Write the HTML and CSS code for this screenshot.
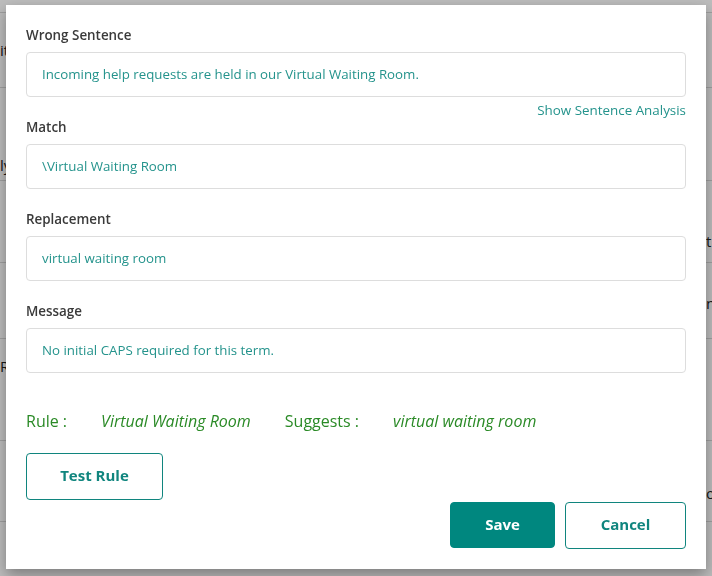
FILE: index.html
```html
<!DOCTYPE html>
<html lang="en">
<head>
    <meta charset="UTF-8">
    <meta name="viewport" content="width=device-width, initial-scale=1.0">
    <title>Edit Rule</title>
    <link rel="stylesheet" href="styles.css">
</head>
<body>
    <!-- the rules table behind the dialog -->
    <div class="rule-table">
        <div class="table-row row-a"><span class="cell-left">it</span><span class="cell-right"></span></div>
        <div class="table-row row-b"><span class="cell-left">ly</span><span class="cell-right"></span></div>
        <div class="table-row row-c"><span class="cell-left"></span><span class="cell-right">t</span></div>
        <div class="table-row row-d"><span class="cell-left"></span><span class="cell-right">n</span></div>
        <div class="table-row row-e"><span class="cell-left">R</span><span class="cell-right"></span></div>
        <div class="table-row row-f"><span class="cell-left"></span><span class="cell-right">o</span></div>
        <div class="table-row row-g"><span class="cell-left"></span><span class="cell-right"></span></div>
    </div>

    <div class="overlay"></div>

    <div class="modal">
        <div class="field has-link">
            <div class="field-label">Wrong Sentence</div>
            <div class="field-box">Incoming help requests are held in our Virtual Waiting Room.</div>
        </div>
        <div class="field-link"><a href="#">Show Sentence Analysis</a></div>

        <div class="field">
            <div class="field-label">Match</div>
            <div class="field-box">\Virtual Waiting Room</div>
        </div>

        <div class="field">
            <div class="field-label">Replacement</div>
            <div class="field-box">virtual waiting room</div>
        </div>

        <div class="field">
            <div class="field-label">Message</div>
            <div class="field-box">No initial CAPS required for this term.</div>
        </div>

        <div class="rule-preview">
            <span>Rule :</span>
            <em>Virtual Waiting Room</em>
            <span>Suggests :</span>
            <em>virtual waiting room</em>
        </div>

        <div class="actions">
            <button class="btn btn-outline btn-test">Test Rule</button>
            <div class="actions-right">
                <button class="btn btn-primary btn-save">Save</button>
                <button class="btn btn-outline btn-cancel">Cancel</button>
            </div>
        </div>
    </div>
</body>
</html>
```

FILE: styles.css
```css
body {
    margin: 0;
    background-color: #fff;
    font-family: "Open Sans", "Liberation Sans", sans-serif;
    color: #333;
    overflow: hidden;
}
.rule-table {
    padding-top: 12px;
}
.table-row {
    display: flex;
    justify-content: space-between;
    align-items: flex-start;
    box-sizing: border-box;
    border-top: 1px solid #d8d8d8;
    font-size: 15px;
    line-height: 20px;
    color: #222;
}
.row-a { height: 75px; padding-top: 27px; }
.row-b { height: 93px; padding-top: 67px; }
.row-c { height: 82px; padding-top: 50px; }
.row-d { height: 76px; padding-top: 30px; }
.row-e { height: 102px; padding-top: 17px; }
.row-f { height: 81px; padding-top: 42px; }
.row-g { height: 60px; }
.cell-left {
    width: 7px;
    overflow: hidden;
    text-align: right;
    white-space: nowrap;
}
.cell-right {
    width: 6px;
    overflow: hidden;
    white-space: nowrap;
}
.overlay {
    position: fixed;
    top: 0;
    left: 0;
    width: 100%;
    height: 100%;
    background-color: rgba(0, 0, 0, 0.26);
}
.modal {
    position: fixed;
    top: 5px;
    left: 6px;
    width: 660px;
    height: 521px;
    padding: 22px 20px 21px;
    background-color: #fff;
    box-shadow: 0 6px 14px rgba(0, 0, 0, 0.35);
}
.field {
    margin-bottom: 22px;
}
.field.has-link {
    margin-bottom: 5px;
}
.field-label {
    font-size: 13.4px;
    font-weight: 600;
    line-height: 16px;
    color: #3a3a3a;
    margin-bottom: 9px;
}
.field-box {
    height: 43px;
    line-height: 43px;
    padding: 0 15px;
    border: 1px solid #ddd;
    border-radius: 4px;
    font-size: 13.3px;
    color: #24938c;
}
.field-link {
    text-align: right;
    font-size: 13.4px;
    line-height: 16px;
    margin-bottom: 1px;
}
.field-link a {
    color: #24938c;
    text-decoration: none;
}
.rule-preview {
    display: flex;
    gap: 34px;
    margin-top: 38px;
    font-size: 16px;
    line-height: 20px;
    color: #2a8a26;
}
.rule-preview em {
    font-style: italic;
}
.actions {
    display: flex;
    justify-content: space-between;
    align-items: flex-start;
    margin-top: 22px;
}
.actions-right {
    display: flex;
    gap: 10px;
    margin-top: 49px;
}
.btn {
    font-family: "Open Sans", "Liberation Sans", sans-serif;
    font-size: 15px;
    font-weight: 700;
    line-height: 18px;
    padding: 0 0 3px;
    border-radius: 4px;
    cursor: pointer;
}
.btn-outline {
    background-color: #fff;
    border: 1px solid #10857e;
    color: #10857e;
}
.btn-primary {
    background-color: #00877f;
    border: 1px solid #00877f;
    color: #fff;
}
.btn-test {
    width: 137px;
    height: 47px;
}
.btn-save {
    width: 105px;
    height: 46px;
}
.btn-cancel {
    width: 121px;
    height: 47px;
}
```
